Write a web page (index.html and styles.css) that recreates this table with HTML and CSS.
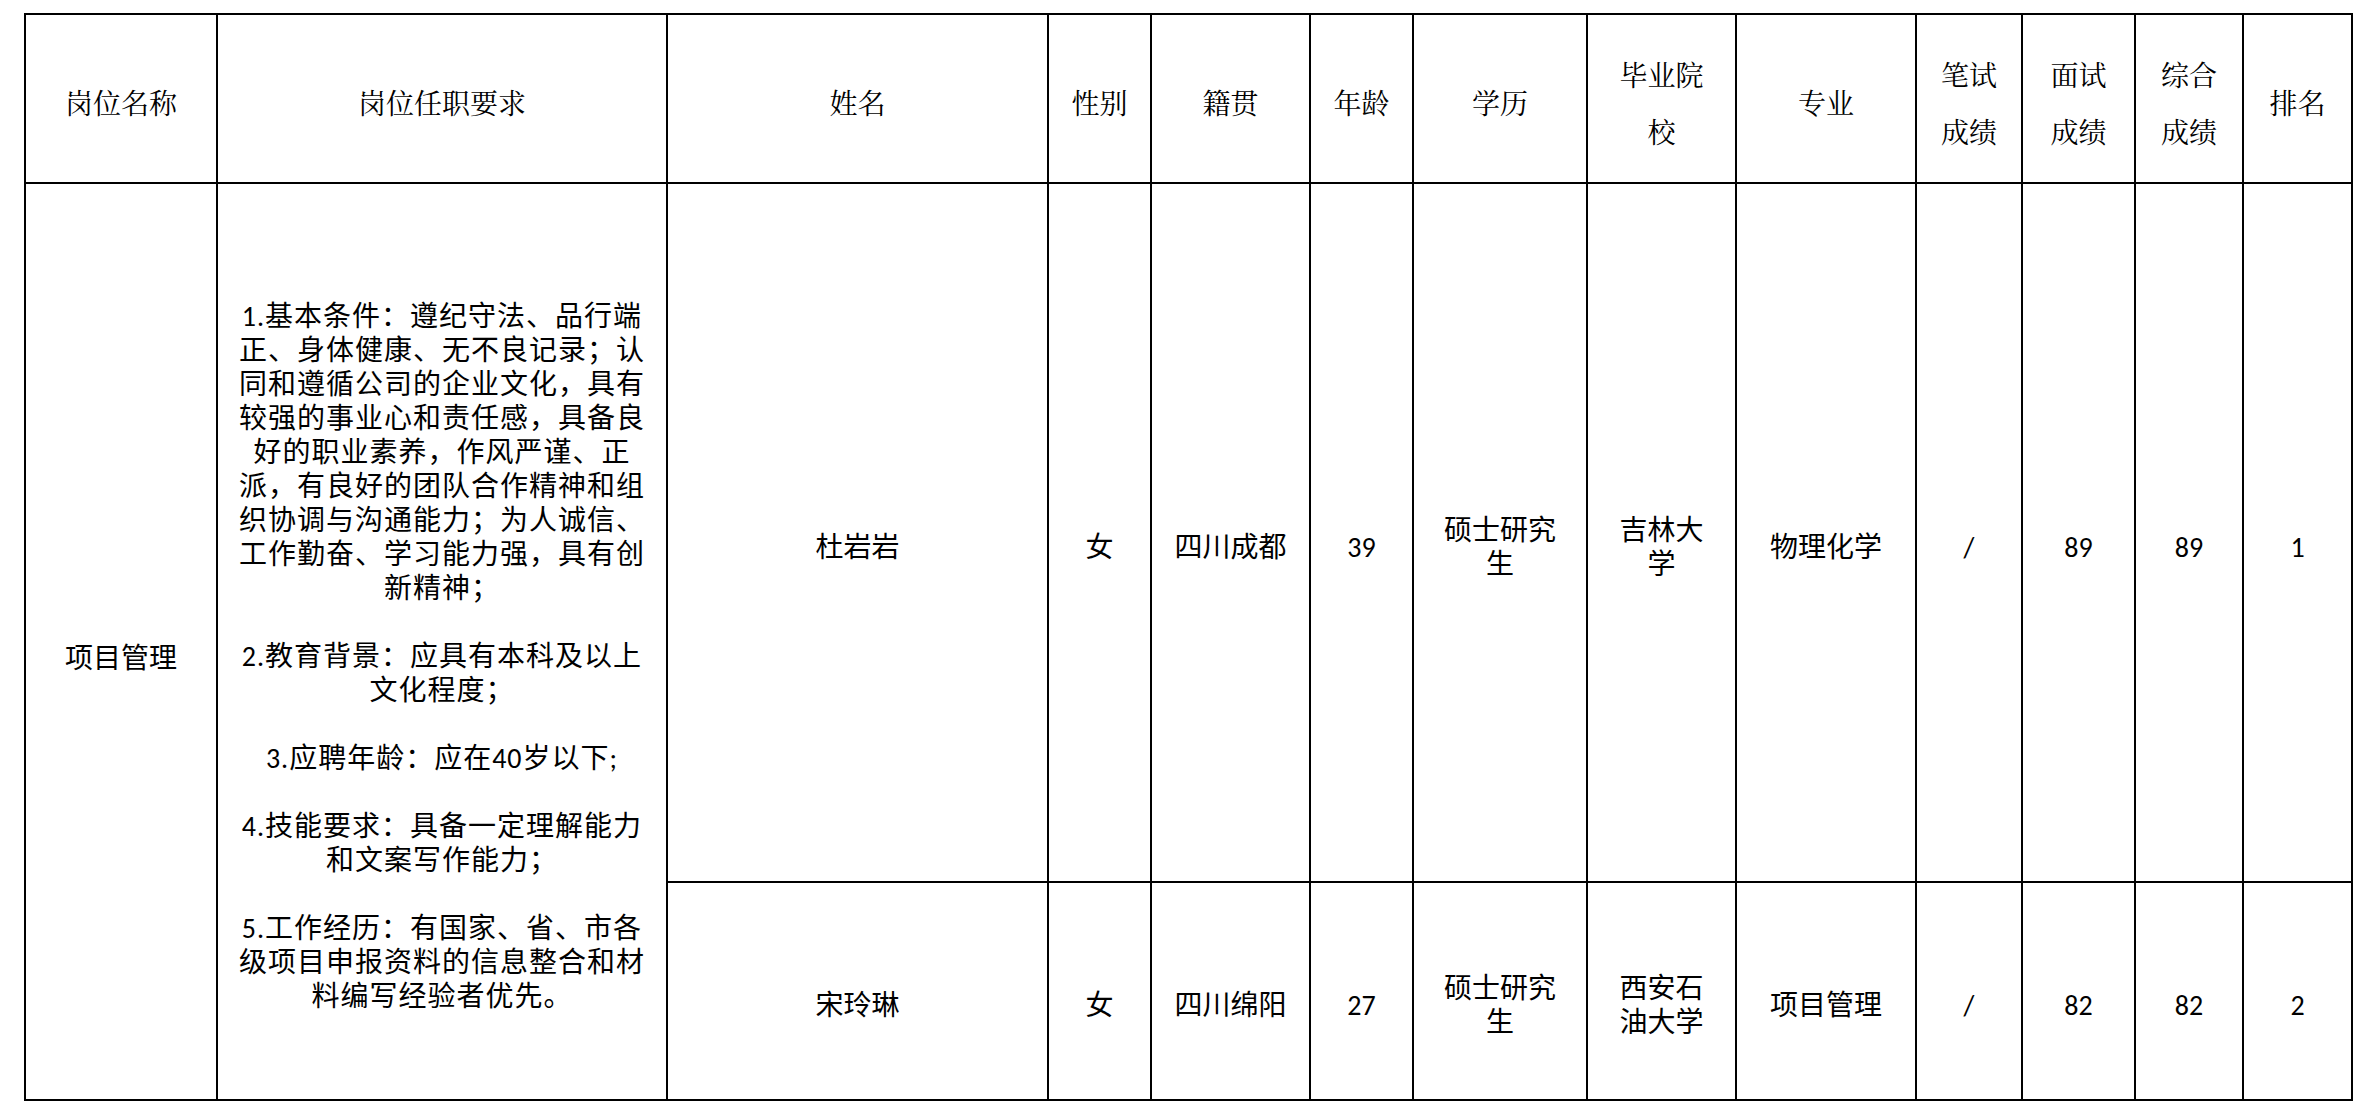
FILE: index.html
```html
<!DOCTYPE html>
<html lang="zh-CN">
<head>
<meta charset="utf-8">
<title>岗位人员表</title>
<link rel="stylesheet" href="styles.css">
</head>
<body>
<table class="sheet">
  <colgroup>
    <col class="c1"><col class="c2"><col class="c3"><col class="c4"><col class="c5"><col class="c6"><col class="c7"><col class="c8"><col class="c9"><col class="c10"><col class="c11"><col class="c12"><col class="c13">
  </colgroup>
  <thead>
    <tr class="head-row">
      <th>岗位名称</th>
      <th>岗位任职要求</th>
      <th>姓名</th>
      <th>性别</th>
      <th>籍贯</th>
      <th>年龄</th>
      <th>学历</th>
      <th>毕业院<br>校</th>
      <th>专业</th>
      <th>笔试<br>成绩</th>
      <th>面试<br>成绩</th>
      <th>综合<br>成绩</th>
      <th>排名</th>
    </tr>
  </thead>
  <tbody>
    <tr class="row-a">
      <td rowspan="2" class="post">项目管理</td>
      <td rowspan="2" class="req">1.基本条件：遵纪守法、品行端<br>正、身体健康、无不良记录；认<br>同和遵循公司的企业文化，具有<br>较强的事业心和责任感，具备良<br>好的职业素养，作风严谨、正<br>派，有良好的团队合作精神和组<br>织协调与沟通能力；为人诚信、<br>工作勤奋、学习能力强，具有创<br>新精神；<br><br>2.教育背景：应具有本科及以上<br>文化程度；<br><br>3.应聘年龄：应在40岁以下;<br><br>4.技能要求：具备一定理解能力<br>和文案写作能力；<br><br>5.工作经历：有国家、省、市各<br>级项目申报资料的信息整合和材<br>料编写经验者优先。</td>
      <td>杜岩岩</td>
      <td>女</td>
      <td>四川成都</td>
      <td>39</td>
      <td>硕士研究<br>生</td>
      <td>吉林大<br>学</td>
      <td>物理化学</td>
      <td>/</td>
      <td>89</td>
      <td>89</td>
      <td>1</td>
    </tr>
    <tr class="row-b">
      <td>宋玲琳</td>
      <td>女</td>
      <td>四川绵阳</td>
      <td>27</td>
      <td>硕士研究<br>生</td>
      <td>西安石<br>油大学</td>
      <td>项目管理</td>
      <td>/</td>
      <td>82</td>
      <td>82</td>
      <td>2</td>
    </tr>
  </tbody>
</table>
</body>
</html>
```

FILE: styles.css
```css
html, body {
  margin: 0;
  padding: 0;
  background: #ffffff;
}

body {
  color: #000000;
}

.sheet {
  border-collapse: collapse;
  table-layout: fixed;
  width: 2329px;
  margin: 13px 0 0 24px;
}

.c1 { width: 192px; }
.c2 { width: 450px; }
.c3 { width: 381px; }
.c4 { width: 103px; }
.c5 { width: 159px; }
.c6 { width: 103px; }
.c7 { width: 174px; }
.c8 { width: 149px; }
.c9 { width: 180px; }
.c10 { width: 106px; }
.c11 { width: 113px; }
.c12 { width: 108px; }
.c13 { width: 109px; }

.sheet th,
.sheet td {
  border: 2px solid #000000;
  text-align: center;
  vertical-align: middle;
  padding: 0;
  overflow: hidden;
}

.sheet th {
  font-family: "Noto Serif CJK SC", "Noto Serif CJK TC", "Liberation Serif", "Noto Sans CJK SC", serif;
  font-weight: normal;
  font-size: 28px;
  line-height: 57px;
  padding-top: 8px;
}

.sheet td {
  font-family: "Carlito", "Lato", "Noto Sans CJK SC", sans-serif;
  font-size: 28px;
  line-height: 34px;
  padding-top: 30px;
}

.head-row { height: 169px; }
.row-a { height: 699px; }
.row-b { height: 218px; }

.sheet td.post {
  padding-top: 34px;
}

.sheet td.req {
  padding-top: 30px;
  padding-left: 6px;
  padding-right: 6px;
  letter-spacing: 1px;
  white-space: nowrap;
}
```
